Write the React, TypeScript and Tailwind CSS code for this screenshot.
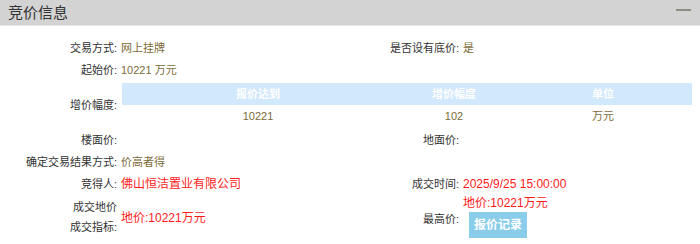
const FONT = { fontFamily: '"Liberation Sans", "Noto Sans CJK SC", sans-serif' }

interface FieldProps {
  label: React.ReactNode
  children?: React.ReactNode
}

const Field = ({ label, children }: FieldProps) => (
  <div className="flex items-center w-[342px]">
    <div className="w-[118px] shrink-0 text-right text-[#333] text-[11px] pr-[1px]">{label}</div>
    <div className="pl-[3px] text-[11px] text-[#7b6a38]">{children}</div>
  </div>
)

const Row = ({ children, className = '' }: { children: React.ReactNode; className?: string }) => (
  <div className={`flex h-[22px] ${className}`}>{children}</div>
)

const Red = ({ children }: { children: React.ReactNode }) => (
  <span className="text-[#ff1a1a] text-[12px] leading-[16px]">{children}</span>
)

export default function App() {
  return (
    <div className="w-[700px] h-[244px] bg-white overflow-hidden" style={FONT}>
      {/* Header */}
      <div className="flex items-center justify-between h-[26px] bg-[#d3d3d3] border-b border-[#e4e4e4] pl-[8px] pr-[9px]">
        <h2 className="text-[15px] text-[#333] leading-[25px]">竞价信息</h2>
        <span className="block w-[15px] h-[2px] bg-[#8c8c80] mb-[5px]" />
      </div>

      {/* Content */}
      <div className="flex flex-col pt-[11px]">
        <Row>
          <Field label="交易方式:">网上挂牌</Field>
          <Field label="是否设有底价:">是</Field>
        </Row>
        <Row>
          <Field label="起始价:">10221 万元</Field>
        </Row>

        <div className="flex items-center mt-[2px]">
          <div className="w-[118px] shrink-0 text-right text-[#333] text-[11px] pr-[1px]">增价幅度:</div>
          <table className="ml-[4px] w-[570px] border-collapse text-[11px]">
            <thead>
              <tr className="bg-[#d2e8fc] h-[22px] text-white font-bold">
                <th className="w-[272px] font-bold">报价达到</th>
                <th className="w-[120px] font-bold">增价幅度</th>
                <th className="font-bold">单位</th>
              </tr>
            </thead>
            <tbody>
              <tr className="h-[23px] text-[#7b6a38] text-center">
                <td>10221</td>
                <td>102</td>
                <td>万元</td>
              </tr>
            </tbody>
          </table>
        </div>

        <Row className="mt-[1px]">
          <Field label="楼面价:" />
          <Field label="地面价:" />
        </Row>
        <Row>
          <Field label="确定交易结果方式:">价高者得</Field>
        </Row>
        <Row>
          <Field label="竞得人:">
            <Red>佛山恒洁置业有限公司</Red>
          </Field>
          <Field label="成交时间:">
            <Red>2025/9/25 15:00:00</Red>
          </Field>
        </Row>

        <div className="flex">
          <div className="flex items-center w-[342px]">
            <div className="w-[118px] shrink-0 text-right text-[#333] text-[11px] pr-[1px] leading-[20px]">
              成交地价
              <br />
              成交指标:
            </div>
            <div className="pl-[3px]">
              <Red>地价:10221万元</Red>
            </div>
          </div>
          <div className="flex items-center w-[342px]">
            <div className="w-[118px] shrink-0 text-right text-[#333] text-[11px] pr-[1px] pt-[6px]">最高价:</div>
            <div className="pl-[3px] flex flex-col items-start">
              <Red>地价:10221万元</Red>
              <button
                type="button"
                className="mt-[1px] ml-[6px] w-[58px] h-[26px] bg-[#89cdea] text-white text-[12px] font-bold"
              >
                报价记录
              </button>
            </div>
          </div>
        </div>
      </div>
    </div>
  )
}
